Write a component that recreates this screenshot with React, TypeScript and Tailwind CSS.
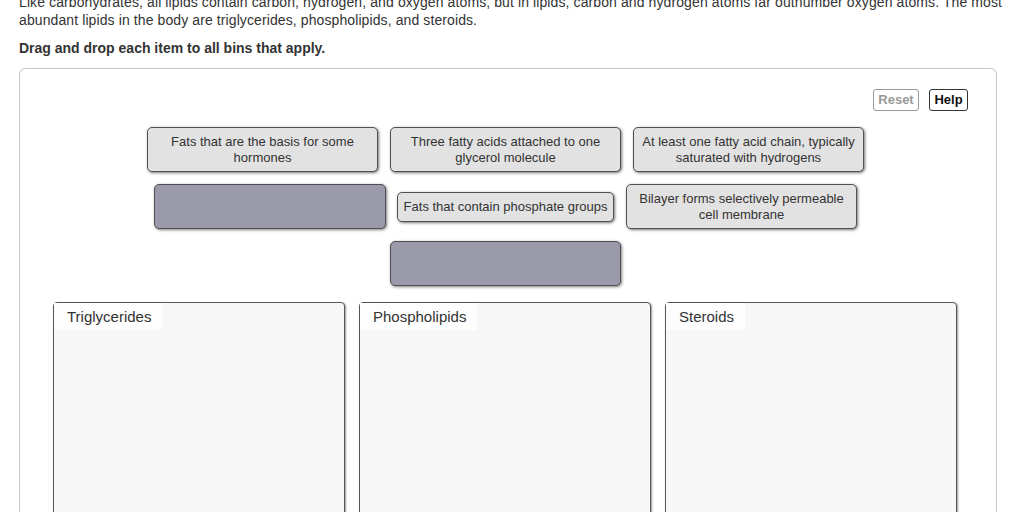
const cardClass =
  'flex items-center justify-center rounded-[5px] border border-[#4f4f55] bg-[#e2e2e2] px-[6px] text-center text-[13px] leading-[16px] text-[#333] shadow-[1px_1px_3px_rgba(0,0,0,0.55)]';

const slotClass =
  'rounded-[5px] border border-[#4f4f55] bg-[#9b9aab] shadow-[1px_1px_3px_rgba(0,0,0,0.5)]';

const bins = ['Triglycerides', 'Phospholipids', 'Steroids'];

function Bin({ label }: { label: string }) {
  return (
    <div className="h-[260px] w-[292px] rounded-[4px] border border-[#55555f] bg-[#f7f7f7] shadow-[1px_1px_2px_rgba(0,0,0,0.4)]">
      <div className="inline-block bg-[#fdfdfd] pl-[13px] pr-[11px] text-[15px] leading-[27px] text-[#333]">
        {label}
      </div>
    </div>
  );
}

export default function App() {
  return (
    <div className="h-[512px] w-[1024px] overflow-hidden bg-white font-['Liberation_Sans',Arial,sans-serif] text-[#333]">
      <div className="pl-[19px]">
        <p className="-mt-[7px] whitespace-nowrap text-[14px] leading-[18px] tracking-[0.1px]">
          Like carbohydrates, all lipids contain carbon, hydrogen, and oxygen atoms, but in lipids, carbon and
          hydrogen atoms far outnumber oxygen atoms. The most
          <br />
          abundant lipids in the body are triglycerides, phospholipids, and steroids.
        </p>
        <p className="mt-[10px] text-[14px] font-bold leading-[18px]">Drag and drop each item to all bins that apply.</p>

        <div className="mt-[11px] h-[460px] w-[978px] rounded-[6px] border border-[#c6c6c6]">
          <div className="flex justify-end gap-[10px] pr-[28px] pt-[20px]">
            <button className="h-[22px] w-[46px] rounded-[3px] border border-[#9a9a9a] text-[13px] font-bold text-[#999]">
              Reset
            </button>
            <button className="h-[22px] w-[39px] rounded-[3px] border border-[#333] text-[13px] font-bold text-[#111]">
              Help
            </button>
          </div>

          <div className="ml-[127px] mt-[16px] grid grid-cols-[231px_231px_231px] grid-rows-[45px_45px_45px] gap-3">
            <div className={cardClass}>Fats that are the basis for some hormones</div>
            <div className={cardClass}>Three fatty acids attached to one glycerol molecule</div>
            <div className={cardClass}>At least one fatty acid chain, typically saturated with hydrogens</div>

            <div className={`${slotClass} ml-[7px] w-[232px]`} />
            <div className={`${cardClass} h-[30px] self-center justify-self-center px-[6px]`}>
              Fats that contain phosphate groups
            </div>
            <div className={`${cardClass} -ml-[7px] w-[231px]`}>Bilayer forms selectively permeable cell membrane</div>

            <div />
            <div className={slotClass} />
            <div />
          </div>

          <div className="mt-[16px] flex gap-[14px] pl-[33px]">
            {bins.map((b) => (
              <Bin key={b} label={b} />
            ))}
          </div>
        </div>
      </div>
    </div>
  );
}
